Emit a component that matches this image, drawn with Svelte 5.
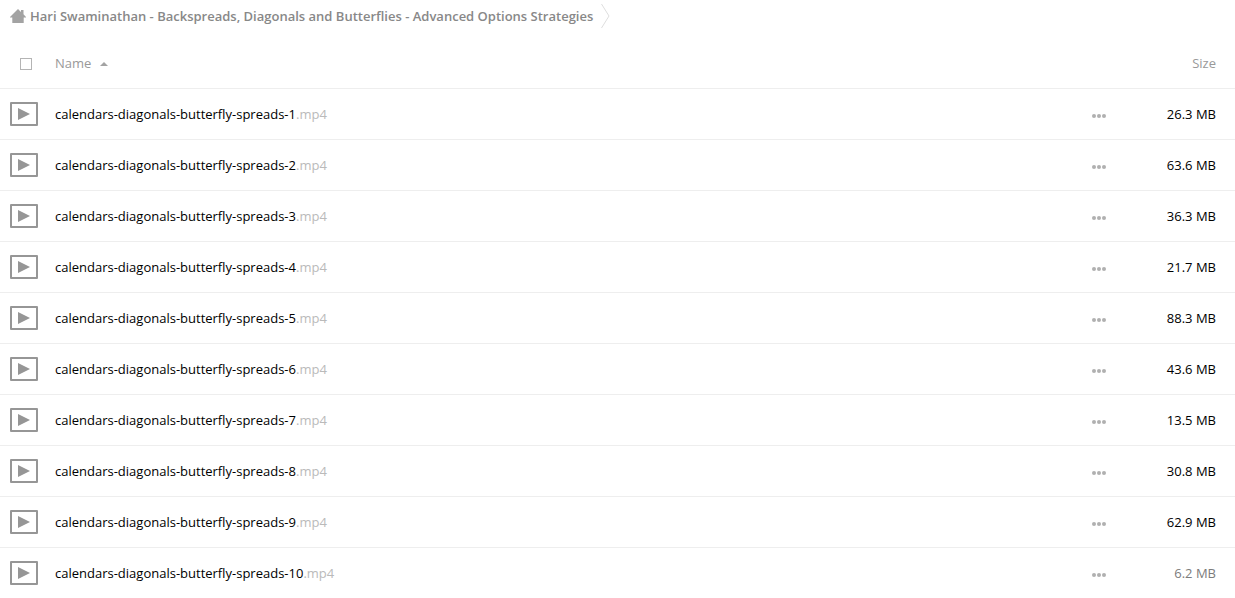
<script>
  const sizes = ['26.3', '63.6', '36.3', '21.7', '88.3', '43.6', '13.5', '30.8', '62.9', '6.2'];
  const files = sizes.map((size, i) => ({
    base: `calendars-diagonals-butterfly-spreads-${i + 1}`,
    ext: '.mp4',
    size: `${size} MB`,
    small: Number(size) < 10
  }));
  let allSelected = $state(false);
</script>

<nav class="crumbs" aria-label="Breadcrumb">
  <a class="home" href="#home" aria-label="Home">
    <svg width="16" height="14" viewBox="0 0 16 14" aria-hidden="true">
      <path fill="#a3a3a3" d="M8 0 L11 3 V1 H13.5 V5.3 L16 8 V8.6 H13.7 V14 H2.3 V8.6 H0 V8 Z" />
    </svg>
  </a>
  <a class="folder" href="#folder">Hari Swaminathan - Backspreads, Diagonals and Butterflies - Advanced Options Strategies</a>
  <svg class="chevron" width="9" height="26" viewBox="0 0 9 26" aria-hidden="true">
    <path fill="none" stroke="#dedede" d="M.5 1 L8 13 L.5 25" />
  </svg>
</nav>

<table>
  <thead>
    <tr>
      <th class="icon"><input type="checkbox" aria-label="Select all" bind:checked={allSelected} /></th>
      <th class="name">
        <button class="sort" type="button">
          Name
          <svg class="arrow" width="8" height="4" viewBox="0 0 8 4" aria-hidden="true"><path fill="#a3a3a3" d="M4 0 L8 4 H0 Z" /></svg>
        </button>
      </th>
      <th class="menu"></th>
      <th class="size"><button class="sort" type="button">Size</button></th>
    </tr>
  </thead>
  <tbody>
    {#each files as file (file.base)}
      <tr>
        <td class="icon">
          <svg width="28" height="24" viewBox="0 0 28 24" aria-hidden="true">
            <rect x="1" y="1" width="26" height="22" fill="#fff" stroke="#969696" stroke-width="2" stroke-linejoin="round" />
            <path fill="#969696" d="M8 6 L20 12 L8 18 Z" />
          </svg>
        </td>
        <td class="name"><a href={`#${file.base}`}>{file.base}<span class="ext">{file.ext}</span></a></td>
        <td class="menu">
          <button type="button" aria-label="More actions">
            <svg width="14" height="4" viewBox="0 0 14 4" aria-hidden="true">
              <g fill="#b0b0b0"><circle cx="2" cy="2" r="2" /><circle cx="7" cy="2" r="2" /><circle cx="12" cy="2" r="2" /></g>
            </svg>
          </button>
        </td>
        <td class="size" class:small={file.small}>{file.size}</td>
      </tr>
    {/each}
  </tbody>
</table>

<style>
  :global(body) {
    margin: 0;
    background: #fff;
    color: #000;
    font: 13px/20px "Open Sans", sans-serif;
  }
  svg {
    display: block;
  }
  a {
    color: inherit;
    text-decoration: none;
  }
  button {
    border: 0;
    padding: 0;
    background: none;
    color: inherit;
    font: inherit;
    cursor: pointer;
  }
  .crumbs {
    display: flex;
    align-items: center;
    box-sizing: border-box;
    height: 38px;
    padding: 0 10px 6px;
    color: #888;
    font-weight: 600;
    white-space: nowrap;
  }
  .folder {
    margin-left: 4px;
  }
  .chevron {
    margin-left: 8px;
  }
  table {
    width: 100%;
    border-collapse: separate;
    border-spacing: 0;
    table-layout: fixed;
  }
  th,
  td {
    box-sizing: border-box;
    height: 51px;
    padding: 0;
    border-bottom: 1px solid #eee;
    font-weight: 400;
    text-align: left;
    vertical-align: middle;
  }
  tbody tr:last-child td {
    height: 50px;
    border-bottom: 0;
  }
  th {
    color: #999;
  }
  .icon {
    width: 55px;
    padding-left: 10px;
  }
  th.icon {
    padding: 2px 0 0 20px;
  }
  input {
    display: block;
    appearance: none;
    box-sizing: border-box;
    width: 12px;
    height: 12px;
    margin: 0;
    border: 1px solid #b4b4b4;
    background: #fff;
  }
  input:checked {
    background: #999;
  }
  .sort {
    display: inline-flex;
    align-items: center;
    gap: 9px;
  }
  .arrow {
    margin-top: 2px;
  }
  .ext {
    color: #bababa;
  }
  .menu {
    width: 30px;
  }
  .menu button {
    display: block;
    padding: 4px 0 0;
  }
  .size {
    width: 113px;
    padding-right: 19px;
    text-align: right;
  }
  .small {
    color: #7c7c7c;
  }
</style>
